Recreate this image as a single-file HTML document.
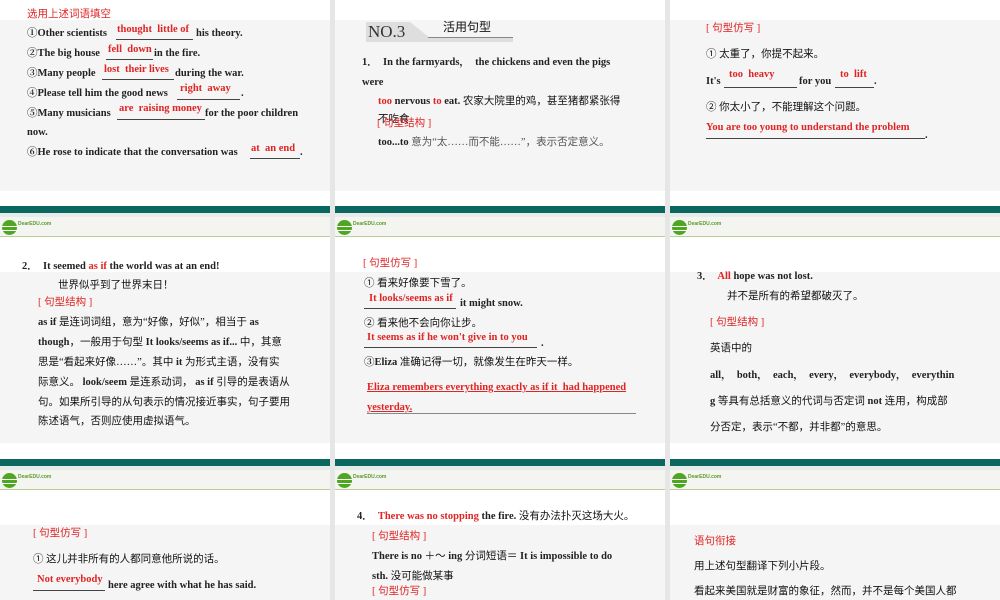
<!DOCTYPE html>
<html><head><meta charset="utf-8">
<style>
*{margin:0;padding:0;box-sizing:border-box}
html{width:1000px;height:600px;overflow:hidden}
body{width:1000px;height:600px;overflow:hidden;background:#e6e6e6;position:relative;font-family:"Liberation Serif","Noto Serif CJK SC",serif;color:#222}
.p{position:absolute;width:330px;height:253px;background:#fff;overflow:hidden}
.p .tb{position:absolute;left:0;top:1px;width:100%;height:7px;background:#0a6760}
.p .hg{position:absolute;left:0;top:8px;width:100%;height:4px;background:#e7ebea}
.p .hd{position:absolute;left:0;top:12px;width:100%;height:20px;background:#f4f5f1;border-bottom:1px solid #b9cf93}
.p .ct{position:absolute;left:0;top:67px;width:100%;height:171px;background:#f5f5f5}
.logo{position:absolute;left:2px;top:3px;width:15px;height:15px;border-radius:50%;background:#4fa623}
.logo:after{content:"";position:absolute;left:0;top:6px;width:15px;height:3px;border-top:1px solid #fff;border-bottom:1px solid #fff}
.lt{position:absolute;left:18px;top:4px;font:bold 5px "Liberation Sans",sans-serif;color:#5a9a2a}
.t{position:absolute;white-space:nowrap;font-weight:bold;font-size:10.5px;line-height:14px}
.r{color:#e02424}
.b{position:absolute;border-bottom:1px solid #444;height:1px}
.cn{font-family:"Liberation Serif","Noto Sans CJK SC",sans-serif;font-weight:normal;color:#111}
.r.cn,.r .cn{color:#e02424}
</style></head><body>

<div class="p" style="left:0;top:-47px"><div class="tb"></div><div class="hg"></div><div class="hd"></div><div class="ct"></div></div>
<div class="p" style="left:335px;top:-47px"><div class="tb"></div><div class="hg"></div><div class="hd"></div><div class="ct"></div></div>
<div class="p" style="left:670px;top:-47px"><div class="tb"></div><div class="hg"></div><div class="hd"></div><div class="ct"></div></div>
<div class="p" style="left:0;top:205px"><div class="tb"></div><div class="hg"></div><div class="hd"><div class="logo"></div><div class="lt">DearEDU.com</div></div><div class="ct"></div></div>
<div class="p" style="left:335px;top:205px"><div class="tb"></div><div class="hg"></div><div class="hd"><div class="logo"></div><div class="lt">DearEDU.com</div></div><div class="ct"></div></div>
<div class="p" style="left:670px;top:205px"><div class="tb"></div><div class="hg"></div><div class="hd"><div class="logo"></div><div class="lt">DearEDU.com</div></div><div class="ct"></div></div>
<div class="p" style="left:0;top:458px;height:142px"><div class="tb"></div><div class="hg"></div><div class="hd"><div class="logo"></div><div class="lt">DearEDU.com</div></div><div class="ct" style="height:75px"></div></div>
<div class="p" style="left:335px;top:458px;height:142px"><div class="tb"></div><div class="hg"></div><div class="hd"><div class="logo"></div><div class="lt">DearEDU.com</div></div><div class="ct" style="height:75px"></div></div>
<div class="p" style="left:670px;top:458px;height:142px"><div class="tb"></div><div class="hg"></div><div class="hd"><div class="logo"></div><div class="lt">DearEDU.com</div></div><div class="ct" style="height:75px"></div></div>

<!-- Panel 1 -->
<div class="t r cn" style="left:27px;top:8px">选用上述词语填空</div>
<div class="t" style="left:27px;top:27px">①Other scientists</div><div class="b" style="left:116px;top:39px;width:77px"></div><div class="t r" style="left:117px;top:23px">thought&nbsp; little of</div><div class="t" style="left:196px;top:27px">his theory.</div>
<div class="t" style="left:27px;top:47px">②The big house</div><div class="b" style="left:106px;top:59px;width:47px"></div><div class="t r" style="left:108px;top:43px">fell&nbsp; down</div><div class="t" style="left:154px;top:47px">in the fire.</div>
<div class="t" style="left:27px;top:67px">③Many people</div><div class="b" style="left:102px;top:79px;width:72px"></div><div class="t r" style="left:104px;top:63px">lost&nbsp; their lives</div><div class="t" style="left:175px;top:67px">during the war.</div>
<div class="t" style="left:27px;top:87px">④Please tell him the good news</div><div class="b" style="left:177px;top:99px;width:63px"></div><div class="t r" style="left:180px;top:82px">right&nbsp; away</div><div class="t" style="left:241px;top:87px">.</div>
<div class="t" style="left:27px;top:107px">⑤Many musicians</div><div class="b" style="left:117px;top:119px;width:88px"></div><div class="t r" style="left:119px;top:102px">are&nbsp; raising money</div><div class="t" style="left:205px;top:107px">for the poor children</div>
<div class="t" style="left:27px;top:126px">now.</div>
<div class="t" style="left:27px;top:146px">⑥He rose to indicate that the conversation was</div><div class="b" style="left:250px;top:158px;width:50px"></div><div class="t r" style="left:251px;top:142px">at&nbsp; an end</div><div class="t" style="left:300px;top:146px">.</div>

<!-- Panel 2 -->
<div style="position:absolute;left:366px;top:22px;width:147px;height:20px;background:#dedede"></div>
<div style="position:absolute;left:410px;top:22px;width:103px;height:16px;background:#f5f5f5;clip-path:polygon(0 0,100% 0,100% 100%,20px 100%)"></div>
<div style="position:absolute;left:428px;top:37px;width:85px;height:1px;background:#888"></div>
<div class="t" style="left:368px;top:22px;font-size:17px;line-height:20px;font-weight:normal;color:#333">NO.3</div>
<div class="t cn" style="left:443px;top:20px;font-size:12px">活用句型</div>
<div class="t" style="left:362px;top:56px">1．&nbsp; In the farmyards，&nbsp; the chickens and even the pigs</div>
<div class="t" style="left:362px;top:76px">were</div>
<div class="t" style="left:378px;top:95px"><span class="r">too</span> nervous <span class="r">to</span> eat. <span class="cn">农家大院里的鸡，甚至猪都紧张得</span></div>
<div class="t cn" style="left:378px;top:113px">不吃食</div>
<div class="t r cn" style="left:377px;top:117px">[ 句型结构 ]</div>
<div class="t" style="left:378px;top:136px">too...to <span class="cn" style="color:#555">意为“太……而不能……”，表示否定意义。</span></div>

<!-- Panel 3 -->
<div class="t r cn" style="left:706px;top:22px">[ 句型仿写 ]</div>
<div class="t cn" style="left:706px;top:48px">① 太重了，你提不起来。</div>
<div class="t" style="left:706px;top:75px">It's</div><div class="b" style="left:724px;top:87px;width:73px"></div><div class="t r" style="left:729px;top:68px">too&nbsp; heavy</div>
<div class="t" style="left:799px;top:75px">for you</div><div class="b" style="left:835px;top:87px;width:39px"></div><div class="t r" style="left:840px;top:68px">to&nbsp; lift</div><div class="t" style="left:874px;top:75px">.</div>
<div class="t cn" style="left:706px;top:101px">② 你太小了，不能理解这个问题。</div>
<div class="t r" style="left:706px;top:121px">You are too young to understand the problem</div>
<div class="b" style="left:706px;top:138px;width:219px"></div><div class="t" style="left:925px;top:129px">.</div>

<!-- Row 2 Panel 1 -->
<div class="t" style="left:22px;top:260px">2．&nbsp; It seemed <span class="r">as if</span> the world was at an end!</div>
<div class="t cn" style="left:58px;top:279px">世界似乎到了世界末日！</div>
<div class="t r cn" style="left:38px;top:296px">[ 句型结构 ]</div>
<div class="t" style="left:38px;top:316px">as if <span class="cn">是连词词组，意为“好像，好似”，相当于</span> as</div>
<div class="t" style="left:38px;top:336px">though<span class="cn">，一般用于句型</span> It looks/seems as if... <span class="cn">中，其意</span></div>
<div class="t" style="left:38px;top:356px"><span class="cn">思是“看起来好像……”。其中</span> it <span class="cn">为形式主语，没有实</span></div>
<div class="t" style="left:38px;top:376px"><span class="cn">际意义。</span> look/seem <span class="cn">是连系动词，</span> as if <span class="cn">引导的是表语从</span></div>
<div class="t cn" style="left:38px;top:396px">句。如果所引导的从句表示的情况接近事实，句子要用</div>
<div class="t cn" style="left:38px;top:415px">陈述语气，否则应使用虚拟语气。</div>

<!-- Row 2 Panel 2 -->
<div class="t r cn" style="left:363px;top:257px">[ 句型仿写 ]</div>
<div class="t cn" style="left:364px;top:277px">① 看来好像要下雪了。</div>
<div class="t r" style="left:369px;top:292px">It looks/seems as if</div><div class="b" style="left:364px;top:308px;width:92px"></div>
<div class="t" style="left:460px;top:297px">it might snow.</div>
<div class="t cn" style="left:364px;top:317px">② 看来他不会向你让步。</div>
<div class="t r" style="left:367px;top:331px">It seems as if he won't give in to you</div><div class="b" style="left:364px;top:347px;width:173px"></div><div class="t" style="left:541px;top:337px">.</div>
<div class="t" style="left:364px;top:356px">③Eliza <span class="cn">准确记得一切，就像发生在昨天一样。</span></div>
<div class="t r" style="left:367px;top:381px;text-decoration:underline">Eliza remembers everything exactly as if it&nbsp; had happened</div>
<div class="t r" style="left:367px;top:401px;text-decoration:underline">yesterday.</div>
<div class="b" style="left:367px;top:413px;width:269px;border-color:#888"></div>

<!-- Row 2 Panel 3 -->
<div class="t" style="left:697px;top:270px">3．&nbsp; <span class="r">All</span> hope was not lost.</div>
<div class="t cn" style="left:727px;top:290px">并不是所有的希望都破灭了。</div>
<div class="t r cn" style="left:710px;top:316px">[ 句型结构 ]</div>
<div class="t cn" style="left:710px;top:342px">英语中的</div>
<div class="t" style="left:710px;top:369px">all，&nbsp; both，&nbsp; each，&nbsp; every，&nbsp; everybody，&nbsp; everythin</div>
<div class="t" style="left:710px;top:395px">g <span class="cn">等具有总括意义的代词与否定词</span> not <span class="cn">连用，构成部</span></div>
<div class="t cn" style="left:710px;top:421px">分否定，表示“不都，并非都”的意思。</div>

<!-- Row 3 Panel 1 -->
<div class="t r cn" style="left:33px;top:527px">[ 句型仿写 ]</div>
<div class="t cn" style="left:33px;top:553px">① 这儿并非所有的人都同意他所说的话。</div>
<div class="t r" style="left:37px;top:573px">Not everybody</div><div class="b" style="left:33px;top:590px;width:72px"></div>
<div class="t" style="left:108px;top:579px">here agree with what he has said.</div>

<!-- Row 3 Panel 2 -->
<div class="t" style="left:357px;top:510px">4．&nbsp; <span class="r">There was no stopping</span> the fire. <span class="cn">没有办法扑灭这场大火。</span></div>
<div class="t r cn" style="left:372px;top:530px">[ 句型结构 ]</div>
<div class="t" style="left:372px;top:550px">There is no <span class="cn">＋～</span> ing <span class="cn">分词短语＝</span> It is impossible to do</div>
<div class="t" style="left:372px;top:570px">sth. <span class="cn">没可能做某事</span></div>
<div class="t r cn" style="left:372px;top:585px">[ 句型仿写 ]</div>

<!-- Row 3 Panel 3 -->
<div class="t r cn" style="left:694px;top:535px">语句衔接</div>
<div class="t cn" style="left:694px;top:560px">用上述句型翻译下列小片段。</div>
<div class="t cn" style="left:694px;top:585px">看起来美国就是财富的象征，然而，并不是每个美国人都</div>

</body></html>
